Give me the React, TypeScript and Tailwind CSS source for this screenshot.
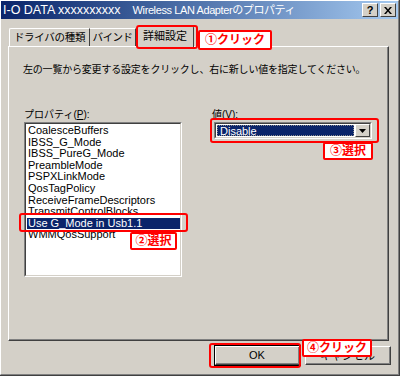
import React from 'react';

const jp = { fontFamily: '"Liberation Sans", "Noto Sans CJK JP", sans-serif' };

const items = [
    'CoalesceBuffers',
    'IBSS_G_Mode',
    'IBSS_PureG_Mode',
    'PreambleMode',
    'PSPXLinkMode',
    'QosTagPolicy',
    'ReceiveFrameDescriptors',
    'TransmitControlBlocks',
    'Use G_Mode in Usb1.1',
    'WMMQosSupport',
];

// 赤い注釈ラベル
const Note: React.FC<{ className: string; children: React.ReactNode }> = ({ className, children }) => (
    <div
        className={`absolute flex items-center justify-center bg-white border-2 border-[#ff0000] rounded-[2px] text-[#ff0000] font-bold text-[12px] leading-none ${className}`}
    >
        {children}
    </div>
);

const App: React.FC = () => {
    return (
        <div className="relative w-[400px] h-[376px] bg-[#d4d0c8] overflow-hidden text-black" style={jp}>
            <div className="h-full border-r border-b border-[#404040]">
                <div className="h-full flex flex-col border-l border-t border-white border-r border-b border-r-[#808080] border-b-[#808080]">
                    {/* タイトルバー */}
                    <div className="h-[18px] flex items-center bg-gradient-to-r from-[#0a246a] to-[#a6caf0] text-white pl-[2px] pr-[2px]">
                        <span className="whitespace-nowrap text-[12.5px]">I-O DATA xxxxxxxxxx</span>
                        <span className="ml-[12px] whitespace-nowrap text-[11px] tracking-[-0.4px]">Wireless LAN Adapterのプロパティ</span>
                        <div className="ml-auto flex gap-[2px]">
                            <div className="w-[16px] h-[14px] bg-[#d4d0c8] border-t border-l border-white border-r border-b border-r-[#404040] border-b-[#404040] flex items-center justify-center text-black text-[11px] font-bold leading-none">?</div>
                            <div className="w-[16px] h-[14px] bg-[#d4d0c8] border-t border-l border-white border-r border-b border-r-[#404040] border-b-[#404040] flex items-center justify-center">
                                <svg width="8" height="7" viewBox="0 0 8 7">
                                    <path d="M0 0h2l2 2.5L6 0h2L5 3.5 8 7H6L4 4.5 2 7H0l3-3.5z" fill="#000" />
                                </svg>
                            </div>
                        </div>
                    </div>

                    {/* タブ */}
                    <div className="flex items-end h-[26px] pl-[8px] mt-[1px]">
                        <div className="h-[18px] w-[81px] flex items-center justify-center text-[10.5px] tracking-[-0.3px] whitespace-nowrap border-t border-l border-white border-r border-r-[#404040] rounded-tl-[2px]">
                            ドライバの種類
                        </div>
                        <div className="h-[18px] w-[46px] flex items-center justify-center text-[10.5px] tracking-[-0.5px] whitespace-nowrap border-t border-white border-r border-r-[#404040]">
                            バインド
                        </div>
                        <div className="relative h-[21px] w-[58px] -mb-[1px] z-10 bg-[#d4d0c8] flex items-center justify-center text-[11px] pb-[2px] whitespace-nowrap border-t border-l border-white border-r border-r-[#404040] rounded-t-[2px]">
                            詳細設定
                        </div>
                    </div>

                    {/* タブパネル */}
                    <div className="ml-[7px] w-[381px] h-[295px] flex flex-col border-t border-l border-white border-r border-b border-r-[#404040] border-b-[#404040]">
                        <div className="h-full flex flex-col border-r border-b border-r-[#808080] border-b-[#808080]">
                            <p className="mt-[15px] pl-[14px] text-[10px] tracking-[-0.2px] whitespace-nowrap">
                                左の一覧から変更する設定をクリックし、右に新しい値を指定してください。
                            </p>
                            <div className="flex mt-[31px] pl-[15px]">
                                <div className="w-[188px]">
                                    <div className="text-[10px] h-[14px] leading-[14px]">
                                        プロパティ(<span className="underline">P</span>):
                                    </div>
                                    <div className="w-[158px] h-[155px] bg-white border-t border-l border-[#808080] border-r border-b border-r-white border-b-white">
                                        <div className="h-full border-t border-l border-[#404040] border-r border-b border-r-[#d4d0c8] border-b-[#d4d0c8] pt-[1px] pl-[1px]">
                                            {items.map((it, i) => (
                                                <div
                                                    key={it}
                                                    className={`h-[11.6px] leading-[11.6px] text-[11px] pl-[1px] whitespace-nowrap ${
                                                        i === 8 ? 'bg-[#0a246a] text-white' : ''
                                                    }`}
                                                >
                                                    {it}
                                                </div>
                                            ))}
                                        </div>
                                    </div>
                                </div>
                                <div>
                                    <div className="text-[10px] h-[14px] leading-[14px]">
                                        値(<span className="underline">V</span>):
                                    </div>
                                    <div className="ml-[2px] w-[158px] h-[17px] bg-white border-t border-l border-[#808080] border-r border-b border-r-white border-b-white">
                                        <div className="h-full flex border-t border-l border-[#404040] border-r border-b border-r-[#d4d0c8] border-b-[#d4d0c8]">
                                            <div className="flex-1 m-[1px] bg-[#0a246a] border border-dotted border-[#8c8c8c] text-white text-[11px] leading-[11px] pl-[2px]">
                                                Disable
                                            </div>
                                            <div className="w-[15px] h-full bg-[#d4d0c8] border-t border-l border-white border-r border-b border-r-[#404040] border-b-[#404040] flex items-center justify-center">
                                                <svg width="7" height="4" viewBox="0 0 7 4">
                                                    <path d="M0 0h7L3.5 4z" fill="#000" />
                                                </svg>
                                            </div>
                                        </div>
                                    </div>
                                </div>
                            </div>
                        </div>
                    </div>

                    {/* ボタン */}
                    <div className="flex justify-end gap-[5px] mt-[5px] pr-[7px]">
                        <div className="w-[85px] h-[19px] border-t border-l border-white border-r border-b border-r-[#404040] border-b-[#404040] outline outline-1 outline-black">
                            <div className="h-full flex items-center justify-center text-[11px] border-r border-b border-r-[#808080] border-b-[#808080]">
                                OK
                            </div>
                        </div>
                        <div className="w-[86px] h-[19px] border-t border-l border-white border-r border-b border-r-[#404040] border-b-[#404040]">
                            <div className="h-full flex items-end justify-center text-[11px] leading-[14px] border-r border-b border-r-[#808080] border-b-[#808080]">
                                キャンセル
                            </div>
                        </div>
                    </div>
                </div>
            </div>

            {/* 注釈 */}
            <div className="absolute left-[136px] top-[25px] w-[62px] h-[24px] border-2 border-[#ff0000] rounded-[3px] z-20" />
            <Note className="left-[198px] top-[30px] w-[74px] h-[20px] z-30">①クリック</Note>

            <div className="absolute left-[19px] top-[213px] w-[169px] h-[19px] border-2 border-[#ff0000] rounded-[3px]" />
            <Note className="left-[130px] top-[232px] w-[47px] h-[18px]">②選択</Note>

            <div className="absolute left-[210px] top-[118px] w-[169px] h-[25px] border-2 border-[#ff0000] rounded-[3px]" />
            <Note className="left-[323px] top-[142px] w-[50px] h-[18px]">③選択</Note>

            <div className="absolute left-[209px] top-[343px] w-[92px] h-[25px] border-2 border-[#ff0000] rounded-[3px]" />
            <Note className="left-[302px] top-[339px] w-[70px] h-[18px]">④クリック</Note>
        </div>
    );
};

export default App;
